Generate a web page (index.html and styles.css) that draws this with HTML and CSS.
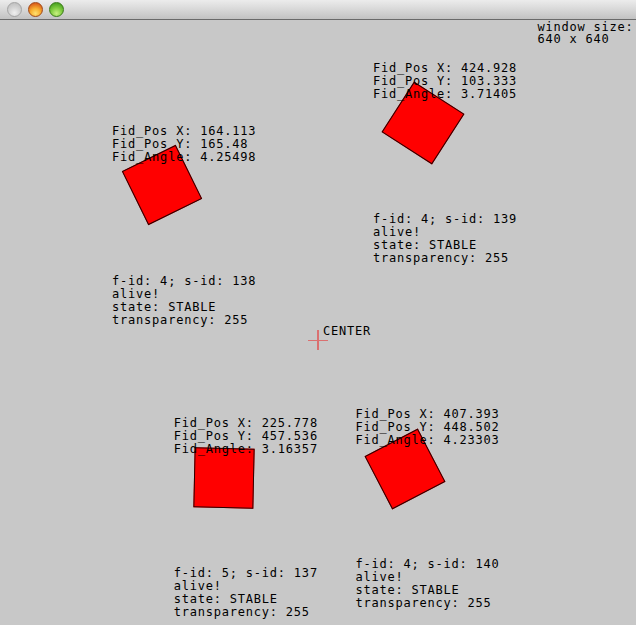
FILE: index.html
```html
<!DOCTYPE html>
<html>
<head>
<meta charset="utf-8">
<title>TUIO Demo</title>
<link rel="stylesheet" href="styles.css">
</head>
<body>
<div class="window">
  <div class="titlebar">
    <span class="light light-close"></span>
    <span class="light light-min"></span>
    <span class="light light-max"></span>
  </div>
  <div class="canvas">
    <div class="square" style="left:132.11px;top:135.48px;transform:rotate(4.25498rad)"></div>
    <div class="square" style="left:392.93px;top:73.33px;transform:rotate(3.71405rad)"></div>
    <div class="square" style="left:193.78px;top:427.54px;transform:rotate(3.16357rad)"></div>
    <div class="square" style="left:375.39px;top:418.5px;transform:rotate(4.23303rad)"></div>

    <div class="label window-size"><div>window size:</div><div>640 x 640</div></div>

    <div class="label" style="left:112.1px;top:104.5px"><div>Fid_Pos X: 164.113</div><div>Fid_Pos Y: 165.48</div><div>Fid_Angle: 4.25498</div></div>
    <div class="label" style="left:112.1px;top:254.8px"><div>f-id: 4; s-id: 138</div><div>alive!</div><div>state: STABLE</div><div>transparency: 255</div></div>

    <div class="label" style="left:372.9px;top:42.3px"><div>Fid_Pos X: 424.928</div><div>Fid_Pos Y: 103.333</div><div>Fid_Angle: 3.71405</div></div>
    <div class="label" style="left:372.9px;top:192.6px"><div>f-id: 4; s-id: 139</div><div>alive!</div><div>state: STABLE</div><div>transparency: 255</div></div>

    <div class="label" style="left:173.8px;top:396.5px"><div>Fid_Pos X: 225.778</div><div>Fid_Pos Y: 457.536</div><div>Fid_Angle: 3.16357</div></div>
    <div class="label" style="left:173.8px;top:547.3px"><div>f-id: 5; s-id: 137</div><div>alive!</div><div>state: STABLE</div><div>transparency: 255</div></div>

    <div class="label" style="left:355.4px;top:387.5px"><div>Fid_Pos X: 407.393</div><div>Fid_Pos Y: 448.502</div><div>Fid_Angle: 4.23303</div></div>
    <div class="label" style="left:355.4px;top:537.8px"><div>f-id: 4; s-id: 140</div><div>alive!</div><div>state: STABLE</div><div>transparency: 255</div></div>

    <div class="cross cross-h"></div>
    <div class="cross cross-v"></div>
    <div class="label center-label">CENTER</div>
  </div>
</div>
</body>
</html>
```
FILE: styles.css
```css
html, body {
  margin: 0;
  padding: 0;
  background: #c8c8c8;
}
.window {
  width: 636px;
  height: 625px;
  overflow: hidden;
  display: flex;
  flex-direction: column;
}
.titlebar {
  height: 19px;
  flex: 0 0 19px;
  border-bottom: 1px solid #6a6a6a;
  background: linear-gradient(to bottom, #ececec 0%, #dcdcdc 40%, #c2c2c2 100%);
  display: flex;
  align-items: center;
  gap: 6px;
  padding-left: 6.5px;
}
.light {
  width: 15px;
  height: 15px;
  border-radius: 50%;
  box-sizing: border-box;
  margin-top: -1px;
}
.light-close {
  background: radial-gradient(circle at 50% 75%, #f0f0f0 0%, #d4d4d4 45%, #b8b8b8 100%);
  border: 1px solid #a4a4a4;
}
.light-min {
  background: radial-gradient(circle at 50% 80%, #ffe070 0%, #f8b030 40%, #d85818 85%, #b03810 100%);
  border: 1px solid #a04818;
}
.light-max {
  background: radial-gradient(circle at 50% 80%, #c8f080 0%, #80cc40 45%, #48a020 85%, #2c7810 100%);
  border: 1px solid #3a7a18;
}
.canvas {
  position: relative;
  flex: 1 1 auto;
  background: #c8c8c8;
}
.square {
  position: absolute;
  width: 60px;
  height: 60px;
  box-sizing: border-box;
  background: #ff0000;
  border: 1px solid #2a0000;
}
.label {
  position: absolute;
  font-family: "DejaVu Sans Mono", monospace;
  font-size: 12px;
  letter-spacing: 0.78px;
  line-height: 13px;
  color: #000;
  white-space: pre;
}
.window-size {
  left: 537.5px;
  top: 0.5px;
  line-height: 12.5px;
}
.center-label {
  left: 323px;
  top: 305px;
}
.cross {
  position: absolute;
  background: #da7070;
}
.cross-h {
  left: 308px;
  top: 319.5px;
  width: 20px;
  height: 1.5px;
}
.cross-v {
  left: 317.2px;
  top: 310px;
  width: 1.5px;
  height: 20px;
}
```
